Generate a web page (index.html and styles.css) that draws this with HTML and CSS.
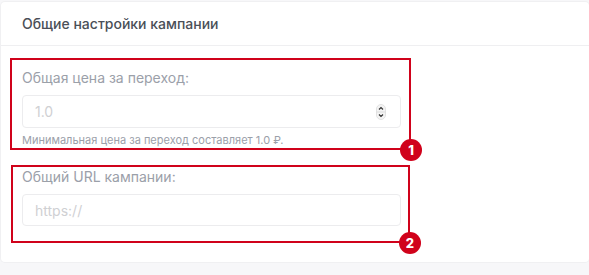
FILE: index.html
```html
<!DOCTYPE html>
<html lang="ru">
<head>
<meta charset="utf-8">
<link rel="stylesheet" href="styles.css">
</head>
<body>
<div class="card">
  <div class="card-header">Общие настройки кампании</div>
  <div class="card-body">
    <div class="group">
      <label class="label">Общая цена за переход:</label>
      <div class="input number">
        <span class="placeholder">1.0</span>
        <span class="spinner">
          <svg width="10" height="16" viewBox="0 0 10 16">
            <rect x="0.5" y="0.5" width="9" height="15" rx="4.5" fill="#f4f4f4" stroke="#e2e2e2"/>
            <line x1="0.5" y1="8" x2="9.5" y2="8" stroke="#dcdcdc"/>
            <path d="M3 5.5 L5 3.5 L7 5.5" fill="none" stroke="#333" stroke-width="1.2"/>
            <path d="M3 10.5 L5 12.5 L7 10.5" fill="none" stroke="#333" stroke-width="1.2"/>
          </svg>
        </span>
      </div>
      <div class="help">Минимальная цена за переход составляет 1.0 ₽.</div>
    </div>
    <div class="group second">
      <label class="label">Общий URL кампании:</label>
      <div class="input"><span class="placeholder">https://</span></div>
    </div>

    <div class="note note-1"></div>
    <div class="badge badge-1">1</div>
    <div class="note note-2"></div>
    <div class="badge badge-2">2</div>
  </div>
</div>
</body>
</html>
```
FILE: styles.css
```css
html, body {
  margin: 0;
  padding: 0;
}
body {
  background: #f7f7f9;
  font-family: Inter, "Noto Sans", sans-serif;
  width: 589px;
  height: 275px;
  overflow: hidden;
}
.card {
  margin: 2px 0 0 1px;
  background: #fff;
  border-radius: 4px;
  height: 260px;
  box-shadow: 0 0 0 1px #f0f0f2;
}
.card-header {
  height: 43px;
  border-bottom: 1px solid #efeff1;
  padding-left: 21px;
  display: flex;
  align-items: center;
  font-size: 14px;
  font-weight: 500;
  color: #4a4f57;
}
.card-body {
  position: relative;
  padding: 22px 0 0 21px;
}
.group {
  width: 379px;
}
.label {
  display: block;
  font-size: 14px;
  line-height: 20px;
  color: #9ba0a9;
  margin-bottom: 7px;
}
.input {
  box-sizing: border-box;
  height: 33px;
  border: 1px solid #ececee;
  border-radius: 4px;
  display: flex;
  align-items: center;
  padding: 0 14px 0 12px;
}
.placeholder {
  flex: 1;
  font-size: 14px;
  color: #cfd0d3;
}
.spinner {
  display: flex;
}
.help {
  margin-top: 5px;
  font-size: 11px;
  line-height: 14px;
  color: #9ba0a9;
}
.second {
  margin-top: 20px;
}
.second .input {
  height: 32px;
}
.note {
  position: absolute;
  border: 2px solid #d0021b;
  box-sizing: border-box;
}
.note-1 {
  left: 9px;
  top: 12px;
  width: 401px;
  height: 92px;
}
.note-2 {
  left: 10px;
  top: 119px;
  width: 399px;
  height: 78px;
}
.badge {
  position: absolute;
  width: 22px;
  height: 22px;
  border-radius: 50%;
  background: #d0021b;
  color: #fff;
  font-size: 13px;
  font-weight: 800;
  line-height: 22px;
  text-align: center;
}
.badge-1 {
  left: 399px;
  top: 93px;
}
.badge-2 {
  left: 398px;
  top: 186px;
}
```
